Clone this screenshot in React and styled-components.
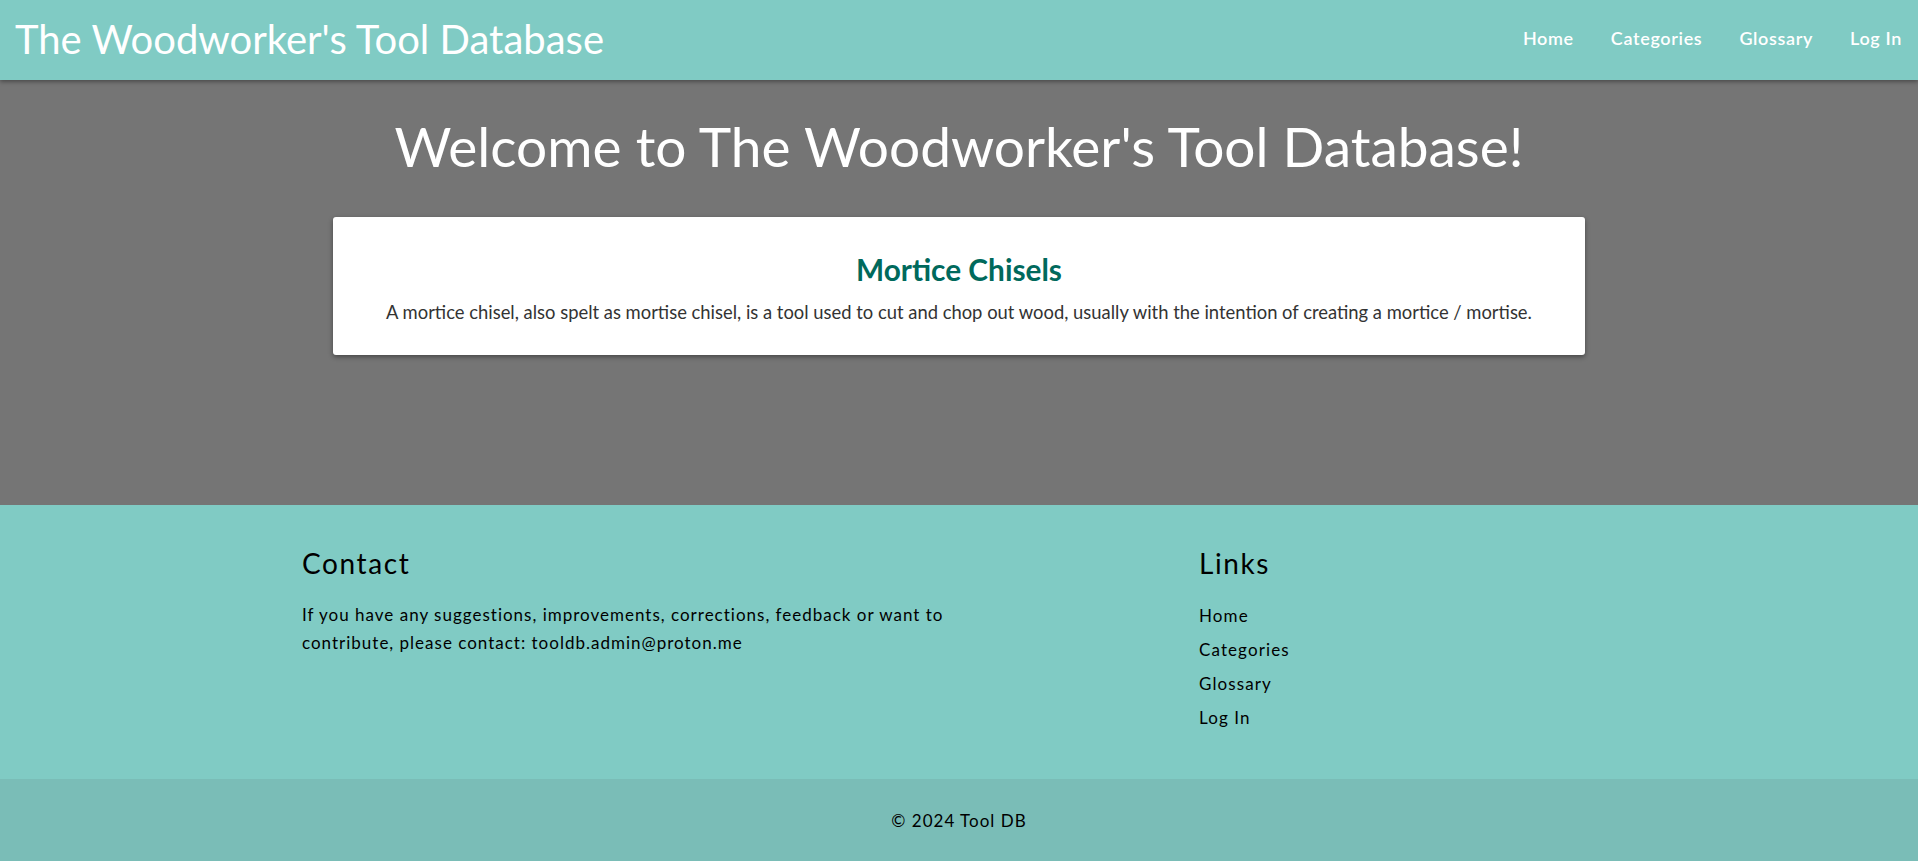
import React from "react";
import styled, { createGlobalStyle } from "styled-components";

const GlobalStyle = createGlobalStyle`
  html, body { margin: 0; padding: 0; }
  body { font-family: Lato, "Open Sans", sans-serif; background: #757575; }
  * { box-sizing: border-box; }
`;

const Header = styled.header`
  position: relative;
  z-index: 2;
  height: 80px;
  background: #80cbc4;
  display: flex;
  align-items: center;
  justify-content: space-between;
  padding: 0 16px 4px 15px;
  box-shadow: 0 2px 4px rgba(0, 0, 0, 0.35);
`;

const Brand = styled.a`
  font-family: Lato, sans-serif;
  font-size: 40px;
  font-weight: 400;
  color: #fff;
  text-decoration: none;
  line-height: 1;
  margin-top: 1px;
`;

const Nav = styled.nav`
  display: flex;
  gap: 37px;
  align-items: center;
`;

const NavLink = styled.a`
  font-family: Lato, sans-serif;
  font-size: 18px;
  font-weight: 600;
  letter-spacing: 0.65px;
  color: #fff;
  text-decoration: none;
`;

const Main = styled.main`
  background: #757575;
  min-height: 425px;
  padding-top: 33px;
  display: flex;
  flex-direction: column;
  align-items: center;
`;

const Title = styled.h1`
  margin: 0;
  font-family: Lato, sans-serif;
  font-size: 55px;
  font-weight: 400;
  line-height: 1.22;
  color: #fff;
  text-align: center;
`;

const Card = styled.section`
  margin-top: 37px;
  width: 1252px;
  background: #fff;
  border-radius: 3px;
  box-shadow: 0 2px 5px rgba(0, 0, 0, 0.4);
  padding: 35px 24px 29px;
  text-align: center;
`;

const CardTitle = styled.h2`
  margin: 0;
  font-size: 29.8px;
  font-weight: 700;
  line-height: 1.2;
  color: #00695c;
`;

const CardText = styled.p`
  margin: 11px 0 0;
  font-size: 18.4px;
  line-height: 1.5;
  color: #333;
`;

const Footer = styled.footer`
  background: #80cbc4;
  padding: 42px 0 44px;
`;

const FooterGrid = styled.div`
  width: 1314px;
  margin: 0 auto;
  display: grid;
  grid-template-columns: 897px 1fr;
`;

const FooterHeading = styled.h3`
  margin: 0;
  font-size: 28px;
  font-weight: 400;
  line-height: 1.2;
  letter-spacing: 1.6px;
  color: #000;
`;

const FooterText = styled.p`
  margin: 20px 0 0;
  max-width: 690px;
  font-size: 17px;
  line-height: 28px;
  letter-spacing: 1px;
  color: #000;
`;

const LinkList = styled.ul`
  list-style: none;
  margin: 18px 0 0;
  padding: 0;
`;

const FooterLink = styled.a`
  display: block;
  font-size: 17px;
  line-height: 34px;
  letter-spacing: 1.1px;
  color: #000;
  text-decoration: none;
`;

const Copyright = styled.div`
  height: 83px;
  background: #7abdb7;
  display: flex;
  align-items: center;
  justify-content: center;
  font-size: 17px;
  letter-spacing: 1px;
  color: #000;
`;

const links = ["Home", "Categories", "Glossary", "Log In"];

export default function App() {
  return (
    <>
      <GlobalStyle />
      <Header>
        <Brand href="#">The Woodworker's Tool Database</Brand>
        <Nav>
          {links.map((l) => (
            <NavLink key={l} href="#">{l}</NavLink>
          ))}
        </Nav>
      </Header>
      <Main>
        <Title>Welcome to The Woodworker's Tool Database!</Title>
        <Card>
          <CardTitle>Mortice Chisels</CardTitle>
          <CardText>
            A mortice chisel, also spelt as mortise chisel, is a tool used to cut and chop out wood, usually with the intention of creating a mortice / mortise.
          </CardText>
        </Card>
      </Main>
      <Footer>
        <FooterGrid>
          <div>
            <FooterHeading>Contact</FooterHeading>
            <FooterText>
              If you have any suggestions, improvements, corrections, feedback or want to contribute, please contact: tooldb.admin@proton.me
            </FooterText>
          </div>
          <div>
            <FooterHeading>Links</FooterHeading>
            <LinkList>
              {links.map((l) => (
                <li key={l}>
                  <FooterLink href="#">{l}</FooterLink>
                </li>
              ))}
            </LinkList>
          </div>
        </FooterGrid>
      </Footer>
      <Copyright>© 2024 Tool DB</Copyright>
    </>
  );
}
